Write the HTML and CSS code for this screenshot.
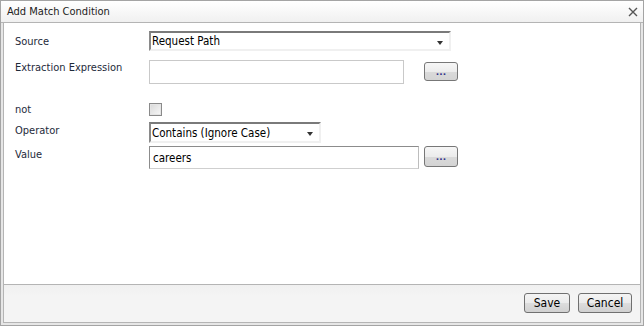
FILE: index.html
```html
<!DOCTYPE html>
<html>
<head>
<meta charset="utf-8">
<link rel="stylesheet" href="styles.css">
</head>
<body>
<div class="window">
  <div class="titlebar">
    <span class="title">Add Match Condition</span>
    <svg class="close" width="10" height="10" viewBox="0 0 10 10"><path d="M1 1 L9 9 M9 1 L1 9" stroke="#555" stroke-width="1.4" fill="none"/></svg>
  </div>
  <div class="body">
    <div class="content">
      <div class="row r-source">
        <label class="lbl">Source</label>
        <div class="select sel-source"><span>Request Path</span><i class="arrow"></i></div>
      </div>
      <div class="row r-expr">
        <label class="lbl">Extraction Expression</label>
        <div class="input in-expr"></div>
        <button class="dots">...</button>
      </div>
      <div class="row r-not">
        <label class="lbl">not</label>
        <span class="check"></span>
      </div>
      <div class="row r-op">
        <label class="lbl">Operator</label>
        <div class="select sel-op"><span>Contains (Ignore Case)</span><i class="arrow"></i></div>
      </div>
      <div class="row r-val">
        <label class="lbl">Value</label>
        <div class="input in-val"><span>careers</span></div>
        <button class="dots dots-val">...</button>
      </div>
    </div>
    <div class="footer">
      <button class="btn btn-save">Save</button>
      <button class="btn btn-cancel">Cancel</button>
    </div>
  </div>
</div>
</body>
</html>
```

FILE: styles.css
```css
* { box-sizing: border-box; }
html, body { margin: 0; padding: 0; background: #fff; }
body {
  font-family: "DejaVu Sans Condensed", "Liberation Sans", sans-serif;
  font-size: 11.5px;
  color: #1e1e1e;
}
.window {
  width: 644px;
  height: 326px;
  border: 1px solid #a4a4a4;
  background: #e6e6e6;
  display: flex;
  flex-direction: column;
}
.titlebar {
  height: 22px;
  border-bottom: 1px solid #b4b4b4;
  background: linear-gradient(#ffffff, #f0f0f0);
  display: flex;
  align-items: center;
  justify-content: space-between;
  padding: 1px 5px 0 6px;
}
.title { color: #222; font-size: 11px; line-height: 14px; }
.close { display: block; }
.body {
  flex: 1;
  margin: 0 2px 2px 2px;
  border: 1px solid #b4b4b4;
  border-top: none;
  display: flex;
  flex-direction: column;
}
.content {
  height: 261px;
  background: #fff;
  padding: 8px 0 0 11px;
}
.row { display: flex; align-items: flex-start; }
.lbl { width: 134px; font-size: 11px; line-height: 14px; color: #1e2a3a; }
.r-source { height: 20px; }
.r-source .lbl { padding-top: 4px; }
.r-expr { height: 24px; margin-top: 9px; }
.r-expr .lbl { padding-top: 1px; }
.r-not { height: 13px; margin-top: 19px; }
.r-not .lbl { padding-top: 0; }
.r-op { height: 21px; margin-top: 6px; }
.r-op .lbl { padding-top: 2px; }
.r-val { height: 23px; margin-top: 3px; }
.r-val .lbl { padding-top: 2px; }

.select {
  position: relative;
  height: 100%;
  background: #fff;
  border-style: solid;
  border-width: 2px;
  border-color: #7a7a7a #f0f0f0 #f0f0f0 #8a8a8a;
  padding: 0 0 0 1px;
  display: flex;
  align-items: center;
  color: #000;
}
.sel-source { width: 302px; }
.sel-op { width: 172px; }
.arrow {
  position: absolute;
  right: 6px;
  top: 8px;
  width: 0; height: 0;
  border-left: 3.5px solid transparent;
  border-right: 3.5px solid transparent;
  border-top: 4px solid #333;
}
.input {
  height: 100%;
  background: #fff;
  border: 1px solid #c9c9c9;
  display: flex;
  align-items: center;
  padding-left: 3px;
  color: #000;
}
.in-expr { width: 255px; }
.in-val {
  width: 270px;
  border-color: #8c8c8c #bdbdbd #cfcfcf #8c8c8c;
}
.dots {
  width: 34px;
  height: 19px;
  margin: 2px 0 0 20px;
  border: 1px solid #777;
  border-radius: 3px;
  background: linear-gradient(#f6f6f6 0%, #ececec 50%, #dadada 51%, #d4d4d4 100%);
  font: bold 9px "DejaVu Sans", sans-serif;
  color: #33338a;
  line-height: 12px;
  padding: 0;
  letter-spacing: 0;
}
.dots-val { margin: 0 0 0 5px; height: 21px; }
.check {
  width: 13px;
  height: 13px;
  border: 1px solid #8a8a8a;
  background: linear-gradient(135deg, #d8d8d8, #f8f8f8);
  box-shadow: inset 0 0 0 1px #e4e4e4;
}
.footer {
  flex: 1;
  border-top: 1px solid #b4b4b4;
  background: linear-gradient(#f0f0f0, #f4f4f4 30%, #f4f4f4);
  display: flex;
  justify-content: flex-end;
  align-items: flex-start;
  padding: 8px 8px 0 0;
  gap: 8px;
}
.btn {
  height: 20px;
  border: 1px solid #707070;
  border-radius: 3px;
  background: linear-gradient(#f4f4f4 0%, #ebebeb 50%, #dddddd 51%, #d0d0d0 100%);
  font-family: "DejaVu Sans Condensed", "Liberation Sans", sans-serif;
  font-size: 12px;
  color: #000;
  padding: 0;
}
.btn-save { width: 46px; }
.btn-cancel { width: 54px; }
```
